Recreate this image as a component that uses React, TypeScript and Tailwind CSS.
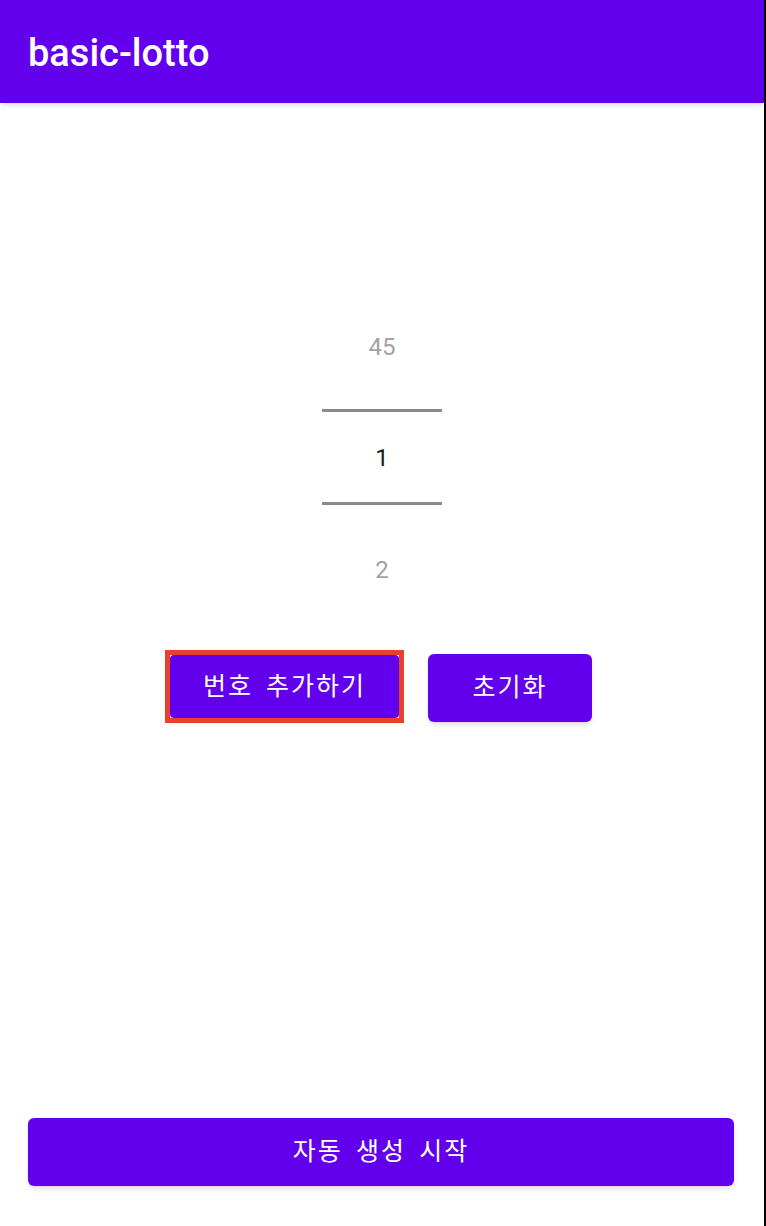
export default function App() {
  const font = { fontFamily: "Roboto, 'Noto Sans CJK KR', sans-serif" };
  const btnFont = { fontFamily: "Roboto, 'Noto Sans CJK KR', sans-serif", wordSpacing: "5px" };

  return (
    <div className="h-screen w-full bg-white border-r-2 border-black flex flex-col" style={font}>
      {/* app bar */}
      <div className="h-[103px] bg-[#6200ee] shadow-md flex items-center pl-[28px] pt-[2px] shrink-0">
        <h1 className="text-white text-[38px] font-medium leading-none">basic-lotto</h1>
      </div>

      {/* number picker */}
      <div className="flex flex-col items-center">
        <div className="mt-[216px] h-[56px] w-[120px] flex items-center justify-center text-[24px] text-[#a3a3a3]">45</div>
        <div className="mt-[34px] h-[3px] w-[120px] bg-[#8a8a8a]" />
        <div className="h-[90px] w-[120px] flex items-center justify-center pt-[2px] text-[24px] text-[#1c1c1c]">1</div>
        <div className="h-[3px] w-[120px] bg-[#8a8a8a]" />
        <div className="mt-[37px] h-[56px] w-[120px] flex items-center justify-center text-[24px] text-[#a3a3a3]">2</div>

        <div className="mt-[52px] flex items-start gap-[24px] mr-[7px]">
          <div className="border-[5px] border-[#ea3f2a] bg-white">
            <button className="w-[229px] h-[63px] bg-[#6200ee] rounded-[4px] text-white text-[25px] tracking-[2px] flex items-center justify-center" style={btnFont}>
              번호 추가하기
            </button>
          </div>
          <button className="mt-[4px] w-[164px] h-[68px] bg-[#6200ee] rounded-[6px] shadow-md text-white text-[25px] tracking-[2px] flex items-center justify-center" style={btnFont}>
            초기화
          </button>
        </div>
      </div>

      {/* bottom action */}
      <div className="mt-auto mb-[40px] pl-[28px] pr-[30px]">
        <button className="w-full h-[68px] bg-[#6200ee] rounded-[6px] shadow-md text-white text-[25px] tracking-[2px] flex items-center justify-center" style={btnFont}>
          자동 생성 시작
        </button>
      </div>
    </div>
  );
}
